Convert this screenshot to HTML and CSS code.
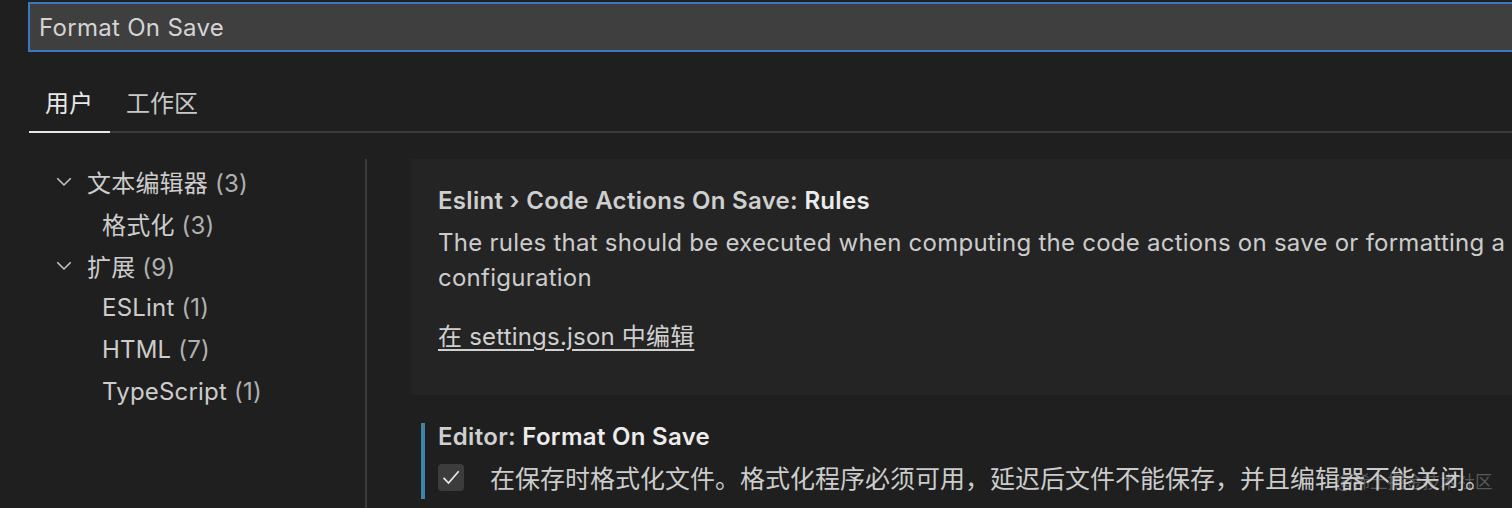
FILE: index.html
```html
<!DOCTYPE html>
<html lang="zh">
<head>
<meta charset="utf-8">
<link rel="stylesheet" href="styles.css">
</head>
<body>
<div class="page">
  <div class="search-wrap">
    <div class="search">Format On Save</div>
  </div>
  <div class="tabs">
    <div class="tab active">用户</div>
    <div class="tab">工作区</div>
  </div>
  <div class="main">
    <div class="tree">
      <div class="row level0"><svg class="chev" viewBox="0 0 16 16"><path d="M2 5.5 L8 11.5 L14 5.5" fill="none" stroke="#c5c5c5" stroke-width="1.4"/></svg><span class="label">文本编辑器 <span class="count">(3)</span></span></div>
      <div class="row level1"><span class="label">格式化 <span class="count">(3)</span></span></div>
      <div class="row level0"><svg class="chev" viewBox="0 0 16 16"><path d="M2 5.5 L8 11.5 L14 5.5" fill="none" stroke="#c5c5c5" stroke-width="1.4"/></svg><span class="label">扩展 <span class="count">(9)</span></span></div>
      <div class="row level1"><span class="label">ESLint <span class="count">(1)</span></span></div>
      <div class="row level1"><span class="label">HTML <span class="count">(7)</span></span></div>
      <div class="row level1"><span class="label">TypeScript <span class="count">(1)</span></span></div>
    </div>
    <div class="divider"></div>
    <div class="settings">
      <div class="card hovered">
        <div class="title"><span class="cat">Eslint › Code Actions On Save: </span><span class="key">Rules</span></div>
        <div class="desc">The rules that should be executed when computing the code actions on save or formatting a file based on the configuration</div>
        <a class="link">在 settings.json 中编辑</a>
      </div>
      <div class="card focused">
        <div class="title"><span class="cat">Editor: </span><span class="key">Format On Save</span></div>
        <div class="check-row">
          <div class="checkbox"><svg viewBox="0 0 16 16"><path d="M2.6 8.6 L6.2 12.4 L13.6 3.8" fill="none" stroke="#ececec" stroke-width="1.2"/></svg></div>
          <span class="check-text">在保存时格式化文件。格式化程序必须可用，延迟后文件不能保存，并且编辑器不能关闭。</span>
        </div>
      </div>
    </div>
  </div>
  <div class="watermark">@稀土掘金技术社区</div>
</div>
</body>
</html>
```

FILE: styles.css
```css
html, body {
  margin: 0;
  padding: 0;
  background: #1f1f1f;
}
body {
  width: 1512px;
  height: 508px;
  overflow: hidden;
  font-family: Inter, "Noto Sans CJK SC", sans-serif;
  color: #cccccc;
}
.page {
  position: relative;
  width: 1512px;
  height: 508px;
  overflow: hidden;
}
.search-wrap {
  padding: 2px 0 0 28px;
}
.search {
  width: 1560px;
  height: 46px;
  border: 2px solid #3a79c2;
  background: #3f3f3f;
  box-sizing: content-box;
  font-size: 24px;
  letter-spacing: 0.3px;
  line-height: 48px;
  padding-left: 9px;
  color: #d4d4d4;
  white-space: nowrap;
}
.tabs {
  display: flex;
  margin: 24px 0 0 29px;
  border-bottom: 2px solid #3b3b3b;
  height: 55px;
}
.tab {
  font-family: "Noto Sans CJK SC", sans-serif;
  font-size: 24px;
  line-height: 52px;
  padding: 0 17px 0 16px;
  color: #c8c8c8;
  margin-bottom: -2px;
}
.tab.active {
  color: #e8e8e8;
  border-bottom: 2px solid #e6e6e6;
}
.main {
  display: flex;
  margin-top: 26px;
  height: 400px;
}
.tree {
  width: 336px;
  padding-left: 29px;
  padding-top: 1px;
  flex: none;
}
.row {
  height: 42px;
  display: flex;
  align-items: center;
  font-size: 24px;
  letter-spacing: 0.2px;
  white-space: nowrap;
  color: #cccccc;
}
.row .count {
  color: #b0b0b0;
}
.row.level0 {
  padding-left: 26px;
}
.row.level1 {
  padding-left: 73px;
}
.chev {
  width: 18px;
  height: 18px;
  margin-right: 14px;
}
.divider {
  width: 2px;
  background: #3a3a3a;
  flex: none;
}
.settings {
  flex: 1;
  padding-left: 44px;
  min-width: 0;
}
.card {
  position: relative;
  padding-left: 27px;
}
.card.hovered {
  background: #242424;
  height: 236px;
  padding-top: 26px;
  box-sizing: border-box;
  overflow: hidden;
}
.title {
  font-size: 24px;
  letter-spacing: 0.3px;
  line-height: 32px;
  font-weight: 600;
  white-space: nowrap;
}
.title .cat {
  color: #cfcfcf;
}
.title .key {
  color: #ececec;
}
.desc {
  font-size: 24px;
  letter-spacing: 0.25px;
  line-height: 35px;
  margin-top: 8px;
  width: 1290px;
  white-space: normal;
}
.link {
  display: inline-block;
  margin-top: 27px;
  font-size: 24px;
  letter-spacing: 0.2px;
  line-height: 30px;
  color: #d0d0d0;
  text-decoration: underline;
  text-underline-offset: 4px;
  white-space: nowrap;
}
.card.focused {
  margin-top: 28px;
  margin-left: 10px;
  padding-left: 13px;
  border-left: 4px solid #3d84a8;
  height: 76px;
  box-sizing: border-box;
}
.card.focused .title {
  line-height: 28px;
}
.check-row {
  display: flex;
  align-items: center;
  margin-top: 8px;
  white-space: nowrap;
}
.checkbox {
  width: 26px;
  height: 27px;
  border-radius: 4px;
  background: #3c3c3c;
  display: flex;
  align-items: center;
  justify-content: center;
  flex: none;
}
.checkbox svg {
  width: 22px;
  height: 22px;
}
.check-text {
  margin-left: 26px;
  font-family: "Noto Sans CJK SC", sans-serif;
  font-size: 25px;
  color: #cccccc;
}
.watermark {
  position: absolute;
  left: 1336px;
  top: 468px;
  font-family: "Noto Sans CJK SC", sans-serif;
  font-size: 17.5px;
  color: rgba(200, 200, 200, 0.35);
  white-space: nowrap;
}
```
